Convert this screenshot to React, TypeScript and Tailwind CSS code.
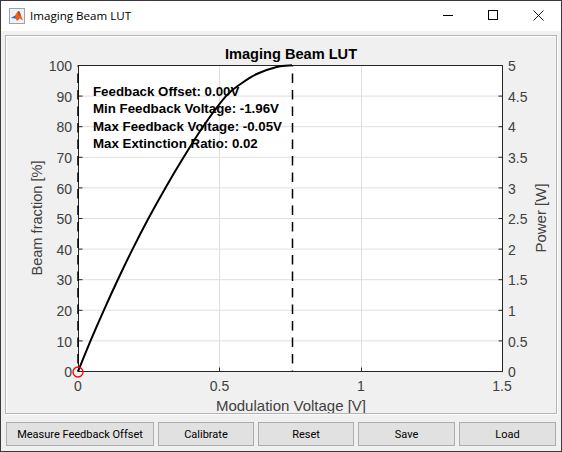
const sans = "font-['Liberation_Sans',Arial,sans-serif]";

const yLeft = [0, 10, 20, 30, 40, 50, 60, 70, 80, 90, 100];
const yRight = ["0", "0.5", "1", "1.5", "2", "2.5", "3", "3.5", "4", "4.5", "5"];
const xTicks = [
  { x: 78, label: "0" },
  { x: 219.5, label: "0.5" },
  { x: 361, label: "1" },
  { x: 502, label: "1.5" },
];
const infoLines = [
  "Feedback Offset: 0.00V",
  "Min Feedback Voltage: -1.96V",
  "Max Feedback Voltage: -0.05V",
  "Max Extinction Ratio: 0.02",
];
const buttons = [
  { label: "Measure Feedback Offset", width: "w-[148px]" },
  { label: "Calibrate", width: "w-[96px]" },
  { label: "Reset", width: "w-[96px]" },
  { label: "Save", width: "w-[97px]" },
  { label: "Load", width: "w-[97px]" },
];

const TOP = 65.5;
const BOTTOM = 371.5;
const LEFT = 78.5;
const RIGHT = 502.5;
const rowY = (i: number) => BOTTOM - (i * (BOTTOM - TOP)) / 10;
const labelY = (i: number) => Math.round(rowY(i) + 5.6);

// x of the curve at each 10% row, then the flat top, page coordinates
const curveX = [78, 90.5, 103.8, 117.8, 132.6, 148.4, 165.4, 183.6, 203, 226];
const curvePoints = [
  ...curveX.map((x, i) => [x, rowY(i)]),
  [242, 83], [256.7, 74], [276.7, 67], [292, 65.3],
];

const smoothPath = (pts: number[][]) => {
  let d = `M${pts[0][0]} ${pts[0][1]}`;
  for (let i = 0; i < pts.length - 1; i++) {
    const p0 = pts[Math.max(i - 1, 0)];
    const p1 = pts[i];
    const p2 = pts[i + 1];
    const p3 = pts[Math.min(i + 2, pts.length - 1)];
    d += ` C${p1[0] + (p2[0] - p0[0]) / 6} ${p1[1] + (p2[1] - p0[1]) / 6} ${p2[0] - (p3[0] - p1[0]) / 6} ${p2[1] - (p3[1] - p1[1]) / 6} ${p2[0]} ${p2[1]}`;
  }
  return d;
};

const MatlabIcon = () => (
  <svg width="16" height="16" viewBox="0 0 16 16" className="shrink-0">
    <rect x="0.5" y="0.5" width="15" height="15" fill="#eef1f5" stroke="#9aa3ad" />
    <path d="M2 10 L5.5 8 L9 3 L10.5 3.5 L14 12.5 L11 10.5 L8 13 L6 10 Z" fill="#e8641c" />
    <path d="M9 3 L10.5 3.5 L12 8 L9.5 7 Z" fill="#c93a1a" />
    <path d="M2 10 L5.5 8 L7.5 9.5 L6 10.5 Z" fill="#2f6fb8" />
  </svg>
);

const Chart = () => (
  <svg width="550" height="377" viewBox="6 36 550 377" className={`block ${sans}`}>
    <rect x={LEFT} y={TOP} width={RIGHT - LEFT} height={BOTTOM - TOP} fill="#ffffff" />

    {yLeft.slice(1, 10).map((_, i) => (
      <line key={i} x1={LEFT} x2={RIGHT} y1={rowY(i + 1)} y2={rowY(i + 1)} stroke="#dfdfdf" />
    ))}
    <line x1={219.5} x2={219.5} y1={TOP} y2={BOTTOM} stroke="#dfdfdf" />
    <line x1={361.5} x2={361.5} y1={TOP} y2={BOTTOM} stroke="#dfdfdf" />

    {yLeft.slice(1, 10).map((_, i) => (
      <g key={i} stroke="#262626">
        <line x1={LEFT} x2={LEFT + 4} y1={rowY(i + 1)} y2={rowY(i + 1)} />
        <line x1={RIGHT - 4} x2={RIGHT} y1={rowY(i + 1)} y2={rowY(i + 1)} />
      </g>
    ))}
    <g stroke="#262626">
      <line x1={219.5} x2={219.5} y1={BOTTOM - 4} y2={BOTTOM} />
      <line x1={361.5} x2={361.5} y1={BOTTOM - 4} y2={BOTTOM} />
    </g>

    <rect x={LEFT} y={TOP} width={RIGHT - LEFT} height={BOTTOM - TOP} fill="none" stroke="#262626" />

    <line x1={78} x2={78} y1={TOP} y2={BOTTOM} stroke="#000000" strokeWidth="1.5" strokeDasharray="9.5 7" strokeDashoffset="8.5" />
    <line x1={292.5} x2={292.5} y1={TOP} y2={BOTTOM} stroke="#000000" strokeWidth="1.5" strokeDasharray="9.5 7" strokeDashoffset="8.5" />

    <path d={smoothPath(curvePoints)} fill="none" stroke="#000000" strokeWidth="2" strokeLinejoin="round" />
    <circle cx="78" cy="372" r="5" fill="none" stroke="#ff0000" strokeWidth="1.3" />

    {yLeft.map((v, i) => (
      <text key={v} x={72} y={labelY(i)} textAnchor="end" fontSize="14" fill="#404040">
        {v}
      </text>
    ))}
    {yRight.map((v, i) => (
      <text key={v} x={508} y={labelY(i)} fontSize="14" fill="#404040">
        {v}
      </text>
    ))}
    {xTicks.map((t) => (
      <text key={t.label} x={t.x} y={391} textAnchor="middle" fontSize="14" fill="#404040">
        {t.label}
      </text>
    ))}

    <text x={291} y={410.5} textAnchor="middle" fontSize="15" fill="#404040">
      Modulation Voltage [V]
    </text>
    <text transform="translate(42 218) rotate(-90)" textAnchor="middle" fontSize="14.6" fill="#404040">
      Beam fraction [%]
    </text>
    <text transform="translate(546 218) rotate(-90)" textAnchor="middle" fontSize="15" fill="#404040">
      Power [W]
    </text>
    <text x={291} y={58.5} textAnchor="middle" fontSize="14.6" fontWeight="700" fill="#000000">
      Imaging Beam LUT
    </text>

    {infoLines.map((line, i) => (
      <text key={line} x={93} y={96 + i * 17.3} fontSize="13.3" fontWeight="700" fill="#000000">
        {line}
      </text>
    ))}
  </svg>
);

export default function App() {
  return (
    <div className="w-[562px] h-[452px] flex flex-col bg-[#f0f0f0] border border-[#3a3a3a] overflow-hidden">
      <div className="h-[30px] shrink-0 bg-white flex items-center pl-[8px]">
        <MatlabIcon />
        <span className="ml-[5px] text-[11.6px] text-black font-['Open_Sans',sans-serif]">Imaging Beam LUT</span>
        <div className="ml-auto flex items-center mb-[2px] pr-[17px] gap-[35px]">
          <svg width="10" height="10" viewBox="0 0 10 10"><path d="M0 5.5H10" stroke="#000000" /></svg>
          <svg width="10" height="10" viewBox="0 0 10 10"><rect x="0.5" y="0.5" width="9" height="9" fill="none" stroke="#000000" /></svg>
          <svg width="11" height="11" viewBox="0 0 11 11"><path d="M0.5 0.5L10.5 10.5M10.5 0.5L0.5 10.5" stroke="#000000" strokeWidth="0.9" /></svg>
        </div>
      </div>

      <div className="mt-[4px] ml-[4px] w-[552px] h-[379px] shrink-0 border border-[#b4b4b4] bg-[#f0f0f0] shadow-[inset_1px_1px_0_#ffffff,1px_1px_0_#ffffff]">
        <Chart />
      </div>

      <div className="mt-[8px] ml-[5px] flex gap-[4px]">
        {buttons.map((b) => (
          <div
            key={b.label}
            className={`${b.width} h-[24px] bg-[#e1e1e1] border border-[#adadad] flex items-center justify-center pt-[3px] text-[11px] text-black font-['Roboto',sans-serif]`}
          >
            {b.label}
          </div>
        ))}
      </div>
    </div>
  );
}
